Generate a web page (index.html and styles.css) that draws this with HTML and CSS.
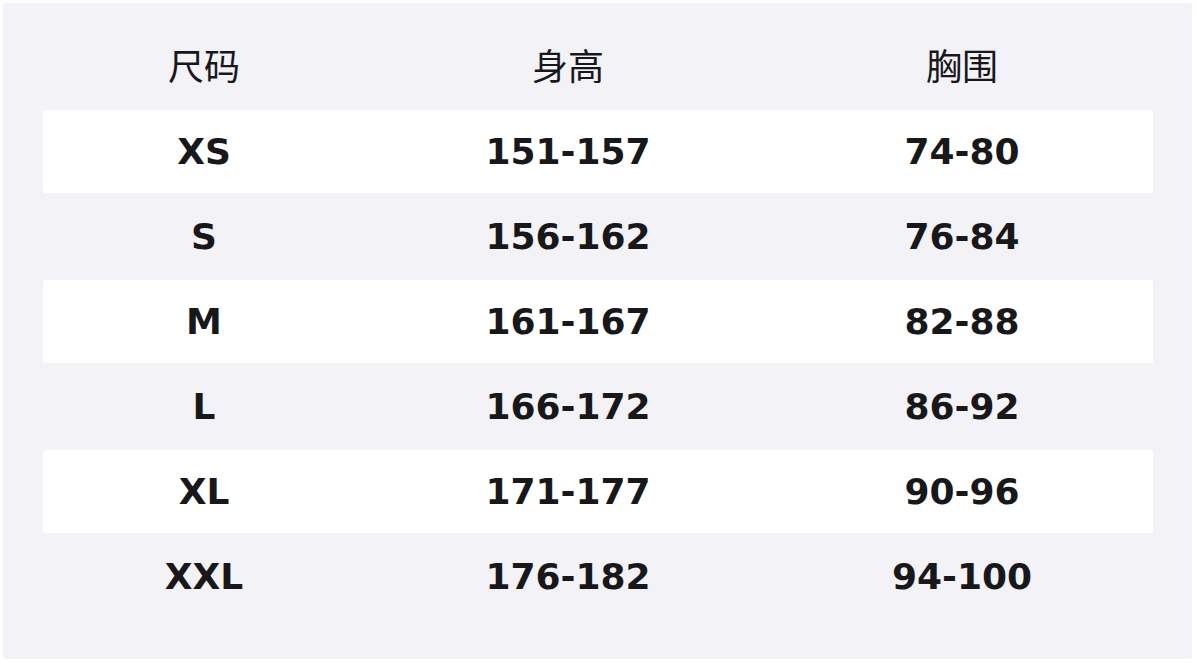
FILE: index.html
```html
<!DOCTYPE html>
<html lang="zh">
<head>
<meta charset="utf-8">
<title>尺码表</title>
<link rel="stylesheet" href="styles.css">
</head>
<body>
<div class="panel">
  <div class="table">
    <div class="row head"><div class="cell">尺码</div><div class="cell">身高</div><div class="cell">胸围</div></div>
    <div class="row odd"><div class="cell">XS</div><div class="cell">151-157</div><div class="cell">74-80</div></div>
    <div class="row"><div class="cell">S</div><div class="cell">156-162</div><div class="cell">76-84</div></div>
    <div class="row odd"><div class="cell">M</div><div class="cell">161-167</div><div class="cell">82-88</div></div>
    <div class="row"><div class="cell">L</div><div class="cell">166-172</div><div class="cell">86-92</div></div>
    <div class="row odd"><div class="cell">XL</div><div class="cell">171-177</div><div class="cell">90-96</div></div>
    <div class="row"><div class="cell">XXL</div><div class="cell">176-182</div><div class="cell">94-100</div></div>
  </div>
</div>
</body>
</html>
```
FILE: styles.css
```css
html, body {
  margin: 0;
  padding: 0;
  background: #ffffff;
}
body {
  padding: 3px 4px 4px 3px;
  width: 1196px;
  height: 663px;
  box-sizing: border-box;
}
.panel {
  background: #f2f2f7;
  border-radius: 3px;
  height: 656px;
  box-sizing: border-box;
  padding: 22px 39px 0 40px;
}
.table {
  display: flex;
  flex-direction: column;
  gap: 2px;
}
.row {
  display: grid;
  grid-template-columns: 322px 406px 382px;
  height: 83px;
  border-radius: 2px;
}
.row.odd {
  background: #ffffff;
}
.cell {
  display: flex;
  align-items: center;
  justify-content: center;
  font-family: "DejaVu Sans", "Noto Sans CJK SC", sans-serif;
  font-weight: 700;
  font-size: 36px;
  color: #18181b;
}
.head .cell {
  font-family: "Noto Sans CJK SC", sans-serif;
  font-weight: 400;
  font-size: 36px;
  padding-bottom: 6px;
}
```
